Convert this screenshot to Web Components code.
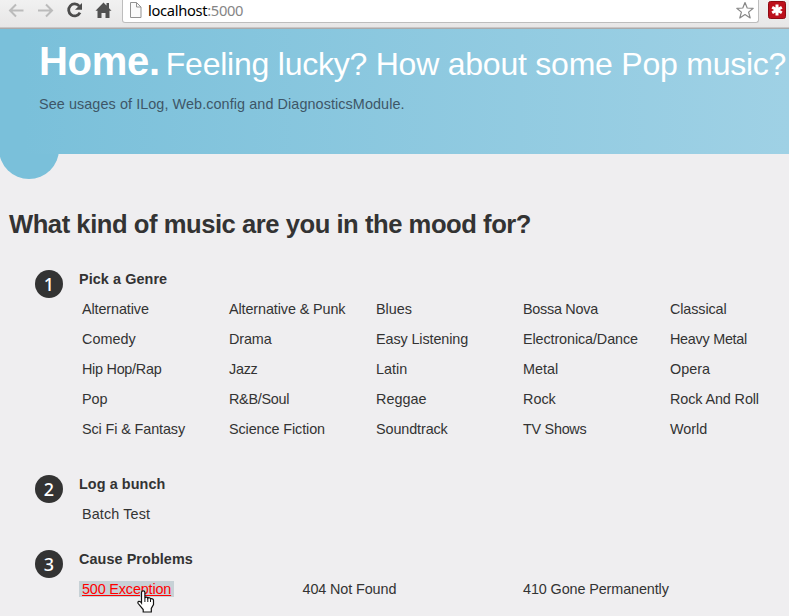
<!DOCTYPE html>
<html lang="en">
<head>
<meta charset="utf-8">
<title>Home</title>
<style>
html, body { margin: 0; height: 616px; overflow: hidden; }
body { background: #efeef0; color: #333; font: 14.4px/20px "Liberation Sans", Arial, sans-serif; }
</style>
</head>
<body>
<music-page></music-page>
<script>
const define = (name, markup, render) => {
  const template = document.createElement('template');
  template.innerHTML = markup;
  customElements.define(name, class extends HTMLElement {
    constructor() {
      super();
      this.attachShadow({ mode: 'open' }).append(template.content.cloneNode(true));
    }
    connectedCallback() { if (render) render(this, this.shadowRoot); }
  });
};

define('browser-bar', `
<style>
:host { display: flex; height: 29px; box-sizing: border-box; overflow: hidden; background: linear-gradient(#f1f1f1, #e7e6e6); border-bottom: 1px solid #aaa9a9; box-shadow: inset 0 -1px #c9c6c6; }
svg { display: block; flex: none; }
.nav { width: 122px; }
.field { flex: 0 0 637px; box-sizing: border-box; height: 23px; display: flex; align-items: flex-start; background: #fff; border: 1px solid #bdbdbd; border-top: 0; border-radius: 0 0 3px 3px; }
.url { flex: 1; padding-left: 5px; font: 14.7px/20px "Noto Sans", "Open Sans", sans-serif; letter-spacing: -.32px; color: #000; }
.url span { color: #858585; }
.ext { margin-left: 9px; }
</style>
<svg class="nav" width="122" height="27" fill="none">
  <g stroke="#bbb" stroke-width="2"><path d="M23.500 10.500H10M16 4.500l-6 6 6 6"/><path d="M38 10.500h14M46 4.500l6 6-6 6"/></g>
  <path d="M79.300 6.100A6 6 0 1 0 80 12.700" stroke="#4c4c4c" stroke-width="2.800"/>
  <path d="M82 3v6.700h-7z" fill="#4c4c4c"/>
  <path d="M103.500 2.500l8 8.300h-2V18h-4v-5h-4v5h-4v-7.200h-2zM106.500 3h2.500v5.500l-2.500-2.500z" fill="#505050"/>
</svg>
<div class="field">
  <svg width="20" height="20"><path d="M7.500 2.500h6l4.500 4.500v10.500H7.500z" fill="#fafafa" stroke="#929292"/><path d="M13.500 2.500V7H18" fill="none" stroke="#929292"/></svg>
  <div class="url">localhost<span>:5000</span></div>
  <svg width="23" height="21"><path d="M10 2.500l2.200 5.500 6 .3-4.600 3.800 1.600 5.900-5.200-3.400L4.800 18l1.600-5.900L1.800 8.300l6-.3z" fill="#fff" stroke="#888" stroke-width="1.200" stroke-linejoin="round"/></svg>
</div>
<svg class="ext" width="18" height="20"><rect x=".5" y="1.500" width="17" height="17" rx="2" fill="#bd101c" stroke="#8e0b13"/><path d="M9 4.500v11M4.200 7.300l9.600 5.400M4.200 12.700l9.600-5.400" stroke="#fff" stroke-width="3"/></svg>
`);

define('hero-banner', `
<style>
:host { display: block; position: relative; box-sizing: border-box; height: 125px; padding: 10px 0 0 39px; white-space: nowrap; background: linear-gradient(90deg, #7ac0da, #7ac0da 3%, #9fd1e5); }
:host::before { content: ""; position: absolute; z-index: -1; left: -1px; top: 90px; width: 60px; height: 60px; border-radius: 50%; background: #7ac0da; }
.titles { display: flex; align-items: baseline; height: 44px; line-height: 44px; color: #fff; gap: 6px; }
h1, h2, p { margin: 0; }
h1 { font-size: 40px; letter-spacing: -.3px; }
h2 { font-size: 32px; font-weight: 400; letter-spacing: -.23px; }
p { margin-top: 11px; color: #3e5667; font-size: 14.4px; line-height: 20px; letter-spacing: .08px; }
</style>
<div class="titles"><h1><slot name="title"></slot></h1><h2><slot name="subtitle"></slot></h2></div>
<p><slot></slot></p>
`);

define('link-item', `
<style>
:host { display: block; height: 20px; padding: 0 0 0 3px; white-space: nowrap; letter-spacing: -.11px; }
:host([fit="loose"]) { letter-spacing: .12px; }
:host([fit="normal"]) { letter-spacing: 0; }
:host([fit="tight"]) { letter-spacing: -.27px; }
:host([active]) { justify-self: start; height: 16px; line-height: 16px; margin-top: 2px; padding-right: 3px; background: #c7d1d6; color: #f00; text-decoration: underline; position: relative; letter-spacing: -.16px; }
svg { display: none; position: absolute; left: 58px; top: 8px; }
:host([active]) svg { display: block; }
</style>
<span><slot></slot></span>
<svg width="18" height="25"><path d="M4.500 14V3.500a1.700 1.700 0 0 1 3.400 0V9c.5-1.200 2.600-1 2.900.3.700-1 2.500-.6 2.700.7.900-.7 3-.2 3 1.200v4.300l-2.200 4V23H6.200v-2.500l-5.200-6.200c-.7-2 1.800-2.800 3.500-.3z" fill="#fff" stroke="#111" stroke-width="1.200"/><path d="M7.900 9v4M10.800 9.500V13M13.500 10.500V13" stroke="#111"/></svg>
`);

define('step-section', `
<style>
:host { display: grid; grid-template-columns: 44px 1fr; padding-left: 35px; }
.badge { width: 28px; height: 28px; margin-top: 1px; border-radius: 50%; background: #333; color: #fff; text-align: center; font: 500 18px/28px "Noto Sans", "Open Sans", sans-serif; }
h5 { margin: 0 0 10px; font-size: 14.4px; line-height: 20px; letter-spacing: .08px; }
.links { display: grid; grid-template-columns: repeat(var(--columns), var(--column-width)); row-gap: 10px; }
</style>
<div class="badge"></div>
<div><h5></h5><div class="links"><slot></slot></div></div>
`, (host, root) => {
  root.querySelector('.badge').textContent = host.getAttribute('number');
  root.querySelector('h5').textContent = host.getAttribute('heading');
  const columns = Number(host.getAttribute('columns'));
  const links = root.querySelector('.links');
  links.style.setProperty('--columns', columns);
  links.style.setProperty('--column-width', (columns === 3 ? 220.5 : 147) + 'px');
});

define('music-page', `
<style>
:host { display: block; position: relative; z-index: 0; width: 789px; height: 616px; overflow: hidden; }
h3 { margin: 0; padding: 55px 0 0 9px; font-size: 25.600px; line-height: 30px; white-space: nowrap; letter-spacing: -.46px; }
.steps { padding-top: 30px; display: flex; flex-direction: column; }
.first { margin-bottom: 35px; }
.second { margin-bottom: 25px; }
</style>
<browser-bar></browser-bar>
<hero-banner><span slot="title">Home.</span><span slot="subtitle">Feeling lucky? How about some Pop music?</span>See usages of ILog, Web.config and DiagnosticsModule.</hero-banner>
<h3>What kind of music are you in the mood for?</h3>
<div class="steps">
<step-section class="first" number="1" heading="Pick a Genre" columns="5">
<link-item>Alternative</link-item><link-item>Alternative &amp; Punk</link-item><link-item fit="normal">Blues</link-item><link-item fit="tight">Bossa Nova</link-item><link-item>Classical</link-item>
<link-item fit="normal">Comedy</link-item><link-item>Drama</link-item><link-item>Easy Listening</link-item><link-item>Electronica/Dance</link-item><link-item fit="tight">Heavy Metal</link-item>
<link-item fit="tight">Hip Hop/Rap</link-item><link-item fit="tight">Jazz</link-item><link-item fit="normal">Latin</link-item><link-item fit="normal">Metal</link-item><link-item fit="normal">Opera</link-item>
<link-item fit="normal">Pop</link-item><link-item fit="tight">R&amp;B/Soul</link-item><link-item fit="normal">Reggae</link-item><link-item fit="normal">Rock</link-item><link-item>Rock And Roll</link-item>
<link-item>Sci Fi &amp; Fantasy</link-item><link-item>Science Fiction</link-item><link-item>Soundtrack</link-item><link-item fit="tight">TV Shows</link-item><link-item fit="normal">World</link-item>
</step-section>
<step-section class="second" number="2" heading="Log a bunch" columns="5"><link-item fit="loose">Batch Test</link-item></step-section>
<step-section number="3" heading="Cause Problems" columns="3"><link-item active>500 Exception</link-item><link-item>404 Not Found</link-item><link-item>410 Gone Permanently</link-item></step-section>
</div>
`);
</script>
</body>
</html>
